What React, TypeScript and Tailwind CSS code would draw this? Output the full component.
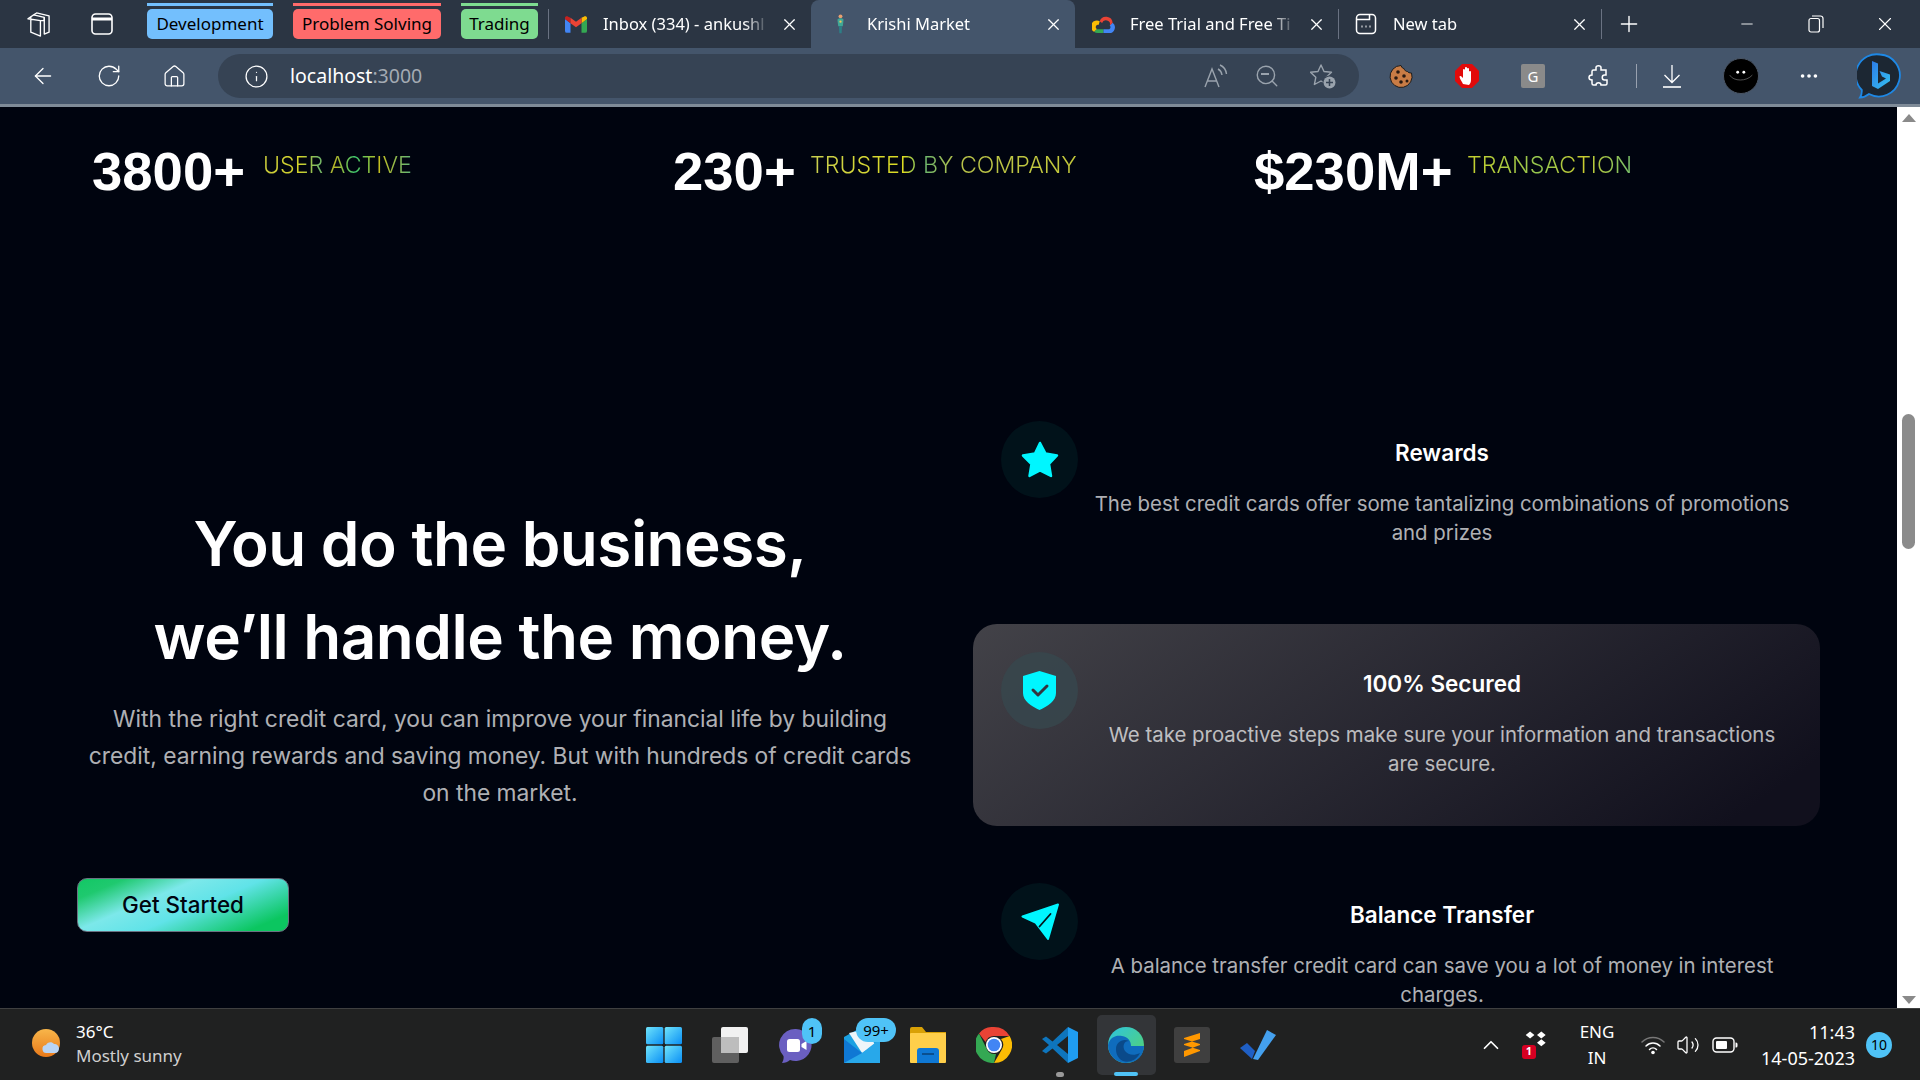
import React from 'react';
import {
  ArrowLeft,
  ChevronUp,
  Home,
  Info,
  Minus,
  MoreHorizontal,
  Plus,
  RotateCw,
  Search,
  Volume2,
  X,
} from 'lucide-react';

const GmailIcon = () => (
  <svg viewBox="0 0 24 18" className="w-[22px] h-[17px] shrink-0">
    <path d="M0 3l6 4.500V18H2a2 2 0 0 1-2-2z" fill="#4285f4" />
    <path d="M24 3l-6 4.500V18h4a2 2 0 0 0 2-2z" fill="#34a853" />
    <path d="M18 1.500v6L24 3V2c0-2-2-2.600-3.500-1.500z" fill="#fbbc04" />
    <path d="M0 3l6 4.500v-6L3.500.5C2-.6 0 0 0 2z" fill="#c5221f" />
    <path d="M6 1.500L12 6l6-4.500v6L12 12 6 7.500z" fill="#ea4335" />
  </svg>
);

const KrishiIcon = () => (
  <svg viewBox="0 0 14 26" className="w-[11px] h-[20px] shrink-0">
    <circle cx="7" cy="3" r="2.500" fill="#e8a070" />
    <path d="M3 7c2-2 6-2 8 0l-1 9H4z" fill="#3fa796" />
    <path d="M5 16h4l-.5 9h-3z" fill="#2d7f86" />
    <circle cx="7" cy="10" r="1.500" fill="#f3c45a" />
  </svg>
);

const GoogleCloudIcon = () => (
  <svg viewBox="0 0 24 20" className="w-[23px] h-[19px] shrink-0">
    <path d="M6 19h6v-4H6a2.500 2.500 0 0 1-1-.2L2 17.500A6 6 0 0 0 6 19z" fill="#34a853" />
    <path d="M12 19h6a6 6 0 0 0 3.600-10.800L18.600 11A2.500 2.500 0 0 1 18 15h-6z" fill="#4285f4" />
    <path d="M2 17.500L5 14.800A2.500 2.500 0 0 1 7 10.300L8 6.500A6 6 0 0 0 2 17.500z" fill="#fbbc04" />
    <path d="M8 6.500A7 7 0 0 1 21.600 8.200L18.600 11A4 4 0 0 0 10.500 8.500L8 6.500z" fill="#ea4335" />
  </svg>
);

const NewTabIcon = () => (
  <svg viewBox="0 0 22 22" className="w-[22px] h-[22px] shrink-0" fill="none" stroke="white" strokeWidth="1.500">
    <rect x="1.500" y="1.500" width="19" height="19" rx="3.500" />
    <path d="M1.500 6.500h13v-5" />
    <path d="M6.500 13.500h1M10.500 13.500h1M14.500 13.500h1" strokeWidth="2" />
  </svg>
);

const Tab = ({ icon, title, active }: { icon: React.ReactNode; title: string; active?: boolean }) => (
  <div
    className={`flex items-center h-full shrink-0 ${
      active ? 'w-[264px] bg-[#44556b] rounded-t-lg pl-[18px] pr-[12px]' : 'w-[262px] pl-[16px] pr-[12px]'
    }`}
  >
    <div className="w-[22px] flex justify-center shrink-0">{icon}</div>
    <span className="ml-[16px] w-[166px] overflow-hidden whitespace-nowrap text-[16.500px] text-white [mask-image:linear-gradient(to_right,black_85%,transparent)]">
      {title}
    </span>
    <X className="ml-auto text-white shrink-0" size={19} strokeWidth={1.5} />
  </div>
);

const Group = ({ label, width, line, bg }: { label: string; width: string; line: string; bg: string }) => (
  <div className={`flex flex-col shrink-0 self-start ${width}`}>
    <div className={`h-[3px] mt-[3px] ${line}`} />
    <div className={`h-[30px] mt-[3px] rounded-[5px] flex items-center justify-center text-[17px] text-black ${bg}`}>
      {label}
    </div>
  </div>
);

const TabStrip = () => (
  <div className="h-12 bg-[#2b3543] flex items-center shrink-0 pl-[26px] relative">
    <svg viewBox="0 0 26 28" className="w-[25px] h-[27px] shrink-0" fill="none" stroke="white" strokeWidth="1.400" strokeLinejoin="round">
      <path d="M2 8l3-2v16l10 4V10L2 8z" />
      <path d="M5 6l3-2 11 2.500V10L15 10" />
      <path d="M8 4l3-2 13 3v17l-5 2V6.500" />
    </svg>
    <svg viewBox="0 0 22 24" className="ml-[40px] w-[22px] h-[24px] shrink-0" fill="none" stroke="white" strokeWidth="1.600">
      <rect x="1" y="2" width="20" height="20" rx="3.500" />
      <path d="M1 7h20" strokeWidth="3" />
    </svg>
    <div className="ml-[34px] flex gap-5 h-full">
      <Group label="Development" width="w-[126px]" line="bg-[#73bffd]" bg="bg-[#73bffd]" />
      <Group label="Problem Solving" width="w-[148px]" line="bg-[#ff6b6b]" bg="bg-[#ff6b6b]" />
      <Group label="Trading" width="w-[77px]" line="bg-[#7edb90]" bg="bg-[#7edb90]" />
    </div>
    <div className="ml-[10px] w-px h-[30px] bg-gray-500 shrink-0" />
    <Tab icon={<GmailIcon />} title="Inbox (334) - ankushl" />
    <Tab active icon={<KrishiIcon />} title="Krishi Market" />
    <div className="w-px" />
    <Tab icon={<GoogleCloudIcon />} title="Free Trial and Free Ti" />
    <div className="w-px h-[30px] bg-gray-500 shrink-0" />
    <Tab icon={<NewTabIcon />} title="New tab" />
    <div className="w-px h-[30px] bg-gray-500 shrink-0" />
    <Plus className="ml-[14px] text-white shrink-0" size={26} strokeWidth={1.3} />
    <Minus className="ml-[96px] text-white shrink-0" size={18} strokeWidth={1.2} />
    <svg viewBox="0 0 16 18" className="ml-[52px] w-[16px] h-[18px] shrink-0" fill="none" stroke="white" strokeWidth="1.200">
      <rect x="1" y="3.500" width="10.500" height="13.500" rx="2" />
      <path d="M4 1h8.500A2.500 2.500 0 0 1 15 3.500V13" />
    </svg>
    <X className="ml-[50px] text-white shrink-0" size={22} strokeWidth={1.2} />
  </div>
);

const ReadAloudIcon = () => (
  <svg viewBox="0 0 26 26" className="w-[26px] h-[26px] shrink-0" fill="none" stroke="#9aa3ad" strokeWidth="1.400">
    <path d="M2 24L9 6l7 18M4.500 18h9" />
    <path d="M15 6c2 1 3.500 3 4 6M17 2c3.500 1.500 6 5 6.500 9" />
  </svg>
);

const FavAddIcon = () => (
  <svg viewBox="0 0 26 26" className="w-[26px] h-[26px] shrink-0" fill="none" stroke="#9aa3ad" strokeWidth="1.400" strokeLinejoin="round">
    <path d="M11 2l3 6.500 7.500.8-5.300 5 1.400 7.200L11 18l-6.600 3.500 1.400-7.200-5.300-5L8 8.500z" />
    <circle cx="19.500" cy="19.500" r="7" fill="#364354" stroke="none" />
    <circle cx="19.500" cy="19.500" r="6" fill="#9aa3ad" stroke="none" />
    <path d="M19.500 16v7M16 19.500h7" stroke="#364354" strokeWidth="1.500" />
  </svg>
);

const CookieIcon = () => (
  <svg viewBox="0 0 24 24" className="w-[24px] h-[24px] shrink-0">
    <path d="M12 1.500c1 2.500 2 3 3 3 .5 2 2 3 3.500 3 .5 1 2 1.500 4 1.500A11 11 0 1 1 12 1.500z" fill="#c97c45" stroke="#1c1c1c" strokeWidth="1" />
    <circle cx="9" cy="8" r="1.800" fill="#2a1a12" />
    <circle cx="15" cy="12" r="1.800" fill="#2a1a12" />
    <circle cx="7" cy="14" r="1.800" fill="#2a1a12" />
    <circle cx="12" cy="18" r="1.800" fill="#2a1a12" />
    <circle cx="18" cy="17" r="1.500" fill="#2a1a12" />
  </svg>
);

const StopHandIcon = () => (
  <svg viewBox="0 0 24 24" className="w-[24px] h-[24px] shrink-0">
    <path d="M7 0h10l7 7v10l-7 7H7l-7-7V7z" fill="#e20a0a" />
    <path d="M8 20c-1-2-3-5-3.500-7 0-1 1-1.500 2-.5L8 14V6c0-1.500 1.800-1.500 2 0v4-6c0-1.500 2-1.500 2 0v6-5c0-1.500 2-1.500 2 0v6-3c0-1.500 2-1.500 2 0v8c0 2-1 4-2 5z" fill="white" />
  </svg>
);

const PuzzleIcon = () => (
  <svg viewBox="0 0 24 24" className="w-[24px] h-[24px] shrink-0" fill="none" stroke="white" strokeWidth="1.500">
    <path d="M9 3.500c0-2.500 5-2.500 5 0V6h5v5h-1.500c-3 0-3 5 0 5H20v3.500a1.500 1.500 0 0 1-1.500 1.500H14c0-3-5-3-5 0H6.500A1.500 1.500 0 0 1 5 19.500V16c-4 0-4-5 0-5V7.500A1.500 1.500 0 0 1 6.500 6H9z" />
  </svg>
);

const DownloadIcon = () => (
  <svg viewBox="0 0 24 24" className="w-[24px] h-[24px] shrink-0" fill="none" stroke="white" strokeWidth="1.300">
    <path d="M12 1v17M4.500 11l7.500 7.500 7.500-7.500" />
    <path d="M3 23h18" strokeWidth="1.600" />
  </svg>
);

const ProfileIcon = () => (
  <div className="w-[36px] h-[36px] rounded-full bg-black border border-gray-600 shrink-0 flex items-center justify-center">
    <svg viewBox="0 0 36 36" className="w-full h-full" fill="none">
      <circle cx="14.500" cy="14" r="1.500" fill="white" />
      <circle cx="21" cy="14" r="1.500" fill="white" />
      <path d="M6 17c4 7 18 7 24 0" stroke="#555" strokeWidth="1" />
    </svg>
  </div>
);

const BingIcon = () => (
  <svg viewBox="0 0 46 46" className="w-[46px] h-[46px] shrink-0">
    <defs>
      <linearGradient id="bing-b" x1="0" y1="0" x2="1" y2="1">
        <stop offset="0" stopColor="#2c7ce8" />
        <stop offset="1" stopColor="#35c1f1" />
      </linearGradient>
    </defs>
    <path d="M23 1.500A21 21 0 1 1 12 41c-2.500 2-6 3.500-9 3.500 1.500-2 2-4 1.800-7.500A21 21 0 0 1 23 1.500z" fill="#1c2733" stroke="#1e88e5" strokeWidth="1.800" />
    <path d="M15 8l6 2.500v20l8-5-4-2-2.500-5.500L33 21.500v6.500l-12 8-6-3z" fill="url(#bing-b)" />
  </svg>
);

const Toolbar = () => (
  <div className="h-[59px] bg-[#44556b] flex items-center shrink-0 pl-[30px] border-b-[3px] border-[#7f8b98]">
    <ArrowLeft className="text-white shrink-0" size={26} strokeWidth={1.2} />
    <RotateCw className="ml-[40px] text-white shrink-0" size={26} strokeWidth={1.2} />
    <Home className="ml-[40px] text-white shrink-0" size={25} strokeWidth={1.2} />
    <div className="ml-[31px] w-[1141px] h-[44px] rounded-[22px] bg-[#364354] flex items-center pl-[26px] pr-[23px] shrink-0">
      <Info className="text-white shrink-0" size={25} strokeWidth={1.2} />
      <span className="ml-[21px] text-[19.500px] text-white">
        localhost<span className="text-[#a4abb3]">:3000</span>
      </span>
      <div className="ml-auto flex items-center">
        <ReadAloudIcon />
        <div className="ml-[25px] relative w-[26px] h-[26px]">
          <Search className="text-[#9aa3ad]" size={26} strokeWidth={1.3} />
          <div className="absolute left-[7px] top-[10px] w-[8px] h-[1.500px] bg-[#9aa3ad]" />
        </div>
        <div className="ml-[30px]">
          <FavAddIcon />
        </div>
      </div>
    </div>
    <div className="ml-[30px]"><CookieIcon /></div>
    <div className="ml-[42px]"><StopHandIcon /></div>
    <div className="ml-[42px] w-[24px] h-[24px] rounded-[2px] bg-[#8a8a8a] text-white text-[15px] flex items-center justify-center">G</div>
    <div className="ml-[42px]"><PuzzleIcon /></div>
    <div className="ml-[25px] w-px h-[24px] bg-gray-400" />
    <div className="ml-[23px]"><DownloadIcon /></div>
    <div className="ml-[39px]"><ProfileIcon /></div>
    <MoreHorizontal className="ml-[39px] text-white shrink-0" size={22} strokeWidth={2} />
    <div className="ml-[37px]"><BingIcon /></div>
  </div>
);

const stats = [
  {
    value: '3800+',
    label: 'USER ACTIVE',
    numberWidth: 'w-[171px]',
    gradient:
      'bg-[linear-gradient(90deg,#c9cb3c_0%,#d2d32a_25%,#6fb56a_38%,#b9b728_48%,#3cc76f_62%,#c5bf1f_78%,#5fb57a_100%)]',
  },
  {
    value: '230+',
    label: 'TRUSTED BY COMPANY',
    numberWidth: 'w-[137px]',
    gradient:
      'bg-[linear-gradient(90deg,#c9cf50_0%,#dcdc22_35%,#67b56f_42%,#b8c34a_55%,#c4c93a_100%)]',
  },
  {
    value: '$230M+',
    label: 'TRANSACTION',
    numberWidth: 'w-[213px]',
    gradient:
      'bg-[linear-gradient(90deg,#c5d02e_0%,#93c550_45%,#c9cc2f_70%,#74bd6a_100%)]',
  },
];

const StatsRow = () => (
  <div className="h-[286px] pl-[92px] pt-[38px] flex font-[Inter,sans-serif]">
    {stats.map((s) => (
      <div key={s.value} className="w-[581px] flex items-start shrink-0">
        <span className={`font-['Liberation_Sans',sans-serif] font-bold text-[54.500px] leading-[54px] text-white whitespace-nowrap shrink-0 ${s.numberWidth}`}>
          {s.value}
        </span>
        <span className={`mt-[8px] text-[23.200px] leading-[24px] font-light bg-clip-text text-transparent ${s.gradient}`}>
          {s.label}
        </span>
      </div>
    ))}
  </div>
);

const StarIcon = () => (
  <svg viewBox="0 0 38 37" className="w-[38px] h-[37px]">
    <path
      d="M19 2l5.500 10.500 11.500 2-8 8.500 2 12L19 29.500 8.500 35l2-12-8.500-8.500 12-2z"
      fill="#00f6ff"
      stroke="#00f6ff"
      strokeWidth="2.500"
      strokeLinejoin="round"
    />
  </svg>
);

const ShieldIcon = () => (
  <svg viewBox="0 0 33 39" className="w-[33px] h-[39px]">
    <path d="M16.500 0L33 5v17c0 8-8 13-16.500 17C8 35 0 30 0 22V5z" fill="#00f6ff" />
    <path d="M10 19l5 5 9-9" fill="none" stroke="#34353f" strokeWidth="3" strokeLinecap="round" strokeLinejoin="round" />
  </svg>
);

const SendIcon = () => (
  <svg viewBox="0 0 38 38" className="w-[38px] h-[38px]">
    <path
      d="M37 1.500L27 36 14.500 19.500 1.500 13.500z"
      fill="#00f6ff"
      stroke="#00f6ff"
      strokeWidth="2"
      strokeLinejoin="round"
    />
    <path d="M18.500 23.500L29.500 11" stroke="#03161c" strokeWidth="1.800" strokeLinecap="round" />
  </svg>
);

const features = [
  {
    icon: <StarIcon />,
    title: 'Rewards',
    body: (
      <>
        The best credit cards offer some tantalizing combinations of promotions
        <br />
        and prizes
      </>
    ),
  },
  {
    icon: <ShieldIcon />,
    title: '100% Secured',
    body: (
      <>
        We take proactive steps make sure your information and transactions
        <br />
        are secure.
      </>
    ),
    active: true,
  },
  {
    icon: <SendIcon />,
    title: 'Balance Transfer',
    body: (
      <>
        A balance transfer credit card can save you a lot of money in interest
        <br />
        charges.
      </>
    ),
  },
];

const Hero = () => (
  <div className="flex font-[Inter,sans-serif]">
    <div className="ml-[77px] w-[846px] shrink-0 pt-[104px] flex flex-col">
      <h1 className="text-[62px] leading-[93px] font-semibold text-white text-center whitespace-nowrap tracking-[-0.5px]">
        You do the business,
        <br />
        we’ll handle the money.
      </h1>
      <p className="mt-[17px] text-[22.800px] leading-[37px] text-white/70 text-center whitespace-nowrap">
        With the right credit card, you can improve your financial life by building
        <br />
        credit, earning rewards and saving money. But with hundreds of credit cards
        <br />
        on the market.
      </p>
      <button className="mt-[67px] w-[212px] h-[54px] rounded-[10px] border border-gray-500 text-[22.400px] font-medium text-[#00040f] bg-[linear-gradient(157deg,#12c764_0%,#1fc96f_14%,#7ce8ea_36%,#60e3e8_56%,#0bc660_88%,#0bc660_100%)]">
        Get Started
      </button>
    </div>
    <div className="ml-[50px] w-[847px] shrink-0 flex flex-col gap-[29px]">
      {features.map((f) => (
        <div
          key={f.title}
          className={`h-[202px] shrink-0 p-[28px] rounded-[24px] flex ${
            f.active ? 'bg-[linear-gradient(144.390deg,#ffffff_-278.560%,#6d6d6d_-78.470%,#11101d_91.610%)]' : ''
          }`}
        >
          <div className={`w-[77px] h-[77px] rounded-full shrink-0 flex items-center justify-center ${f.active ? 'bg-[#37474d]/80' : 'bg-[#09977c]/10'}`}>
            {f.icon}
          </div>
          <div className="ml-[14px] flex-1 pt-[17px] text-center">
            <h4 className="text-[22.500px] leading-[30px] font-semibold text-white">{f.title}</h4>
            <p className="mt-[21px] text-[20.400px] leading-[29px] text-white/70 whitespace-nowrap">{f.body}</p>
          </div>
        </div>
      ))}
    </div>
  </div>
);

const Scrollbar = () => (
  <div className="w-[23px] bg-white flex flex-col items-center shrink-0">
    <svg viewBox="0 0 14 8" className="w-[14px] h-[8px] mt-[7px] shrink-0"><path d="M7 0l7 8H0z" fill="#8a8a8a" /></svg>
    <div className="w-[13px] h-[135px] mt-[292px] rounded-full bg-[#8b8b8b] shrink-0" />
    <svg viewBox="0 0 14 8" className="w-[14px] h-[8px] mt-auto mb-[4px] shrink-0"><path d="M7 8l7-8H0z" fill="#8a8a8a" /></svg>
  </div>
);

const Slot = ({ children }: { children: React.ReactNode }) => (
  <div className="w-[66px] h-full flex items-center justify-center relative shrink-0">{children}</div>
);

const Badge = ({ text, className }: { text: string; className: string }) => (
  <div className={`absolute rounded-full bg-[#4fc3f7] text-black text-[15px] flex items-center justify-center ${className}`}>{text}</div>
);

const StartIcon = () => (
  <svg viewBox="0 0 36 36" className="w-[36px] h-[36px]">
    <defs>
      <linearGradient id="start-g" x1="0" y1="0" x2="1" y2="1">
        <stop offset="0" stopColor="#6fe4fb" />
        <stop offset="1" stopColor="#0a8ff5" />
      </linearGradient>
    </defs>
    <rect x="0" y="0" width="17.300" height="17.300" rx="1.500" fill="url(#start-g)" />
    <rect x="18.700" y="0" width="17.300" height="17.300" rx="1.500" fill="url(#start-g)" />
    <rect x="0" y="18.700" width="17.300" height="17.300" rx="1.500" fill="url(#start-g)" />
    <rect x="18.700" y="18.700" width="17.300" height="17.300" rx="1.500" fill="url(#start-g)" />
  </svg>
);

const TaskViewIcon = () => (
  <svg viewBox="0 0 36 36" className="w-[36px] h-[36px]">
    <rect x="0" y="10" width="27" height="26" rx="2" fill="#5f5f5f" />
    <rect x="9" y="0" width="27" height="26" rx="2" fill="#f1f1f1" />
    <rect x="9" y="10" width="18" height="16" fill="#bdbdbd" />
  </svg>
);

const TeamsIcon = () => (
  <svg viewBox="0 0 36 38" className="w-[36px] h-[38px]">
    <path d="M18 3a16 16 0 1 1-6 31c-2 2-5 3-8 3 1-2 2-4 1.500-7A16 16 0 0 1 18 3z" fill="#6a5fc1" />
    <rect x="9" y="13" width="13" height="13" rx="2.500" fill="white" />
    <path d="M23.500 18l5-3v9l-5-3z" fill="white" />
  </svg>
);

const MailIcon = () => (
  <svg viewBox="0 0 36 36" className="w-[36px] h-[36px]">
    <path d="M0 10L18 0l18 10v26H0z" fill="#1ba1e2" />
    <path d="M5 6l18-4 8 16-13 8z" fill="#eef5f9" />
    <path d="M0 12l18 14 18-14v24H0z" fill="#28a8ea" />
    <path d="M0 12l18 14L0 36z" fill="#0f78d4" />
  </svg>
);

const FolderIcon = () => (
  <svg viewBox="0 0 36 36" className="w-[36px] h-[36px]">
    <path d="M0 2a2 2 0 0 1 2-2h10l4 5h20v4H0z" fill="#d9a106" />
    <rect x="0" y="6" width="36" height="30" rx="1" fill="#ffcf4a" />
    <path d="M7 36V24a3 3 0 0 1 3-3h16a3 3 0 0 1 3 3v12z" fill="#0f78d4" />
    <rect x="12" y="26" width="12" height="2" fill="#0a4f8f" />
  </svg>
);

const ChromeIcon = () => (
  <svg viewBox="0 0 36 36" className="w-[36px] h-[36px]">
    <path d="M18 0a18 18 0 0 1 15.600 9H18a9 9 0 0 0-8.500 6L3 6.500A18 18 0 0 1 18 0z" fill="#ea4335" />
    <path d="M33.600 9A18 18 0 0 1 18 36l7.800-13.500A9 9 0 0 0 25 12z" fill="#fbbc04" />
    <path d="M18 36A18 18 0 0 1 3 6.500l7.500 15A9 9 0 0 0 20 27z" fill="#34a853" />
    <circle cx="18" cy="18" r="8" fill="white" />
    <circle cx="18" cy="18" r="6.300" fill="#4285f4" />
  </svg>
);

const VsCodeIcon = () => (
  <svg viewBox="0 0 36 36" className="w-[36px] h-[36px]">
    <path d="M26 0l10 5v26l-10 5z" fill="#1f9cf0" />
    <path d="M26 0L10.500 14.500 4 9.500 0 12l7 6-7 6 4 2.500 6.500-5L26 36v-9L15 18 26 9z" fill="#0e75bd" />
  </svg>
);

const EdgeIcon = () => (
  <svg viewBox="0 0 36 36" className="w-[36px] h-[36px]">
    <defs>
      <linearGradient id="edge-a" x1="0" y1="0" x2="1" y2="1">
        <stop offset="0" stopColor="#2dc4e0" />
        <stop offset="1" stopColor="#58d468" />
      </linearGradient>
    </defs>
    <circle cx="18" cy="18" r="18" fill="url(#edge-a)" />
    <path d="M0 18C2 10 8 8 14 9c6 1 9 5 9 10h13c0 8-6 17-18 17C8 36 0 28 0 18z" fill="#0f6cbd" />
    <path d="M8 22c0-7 7-11 13-8-5 0-7 5-4 10 3 4 9 5 15 2-4 8-12 10-17 8-4-2-7-6-7-12z" fill="#0a4a8a" />
  </svg>
);

const SublimeIcon = () => (
  <div className="w-[36px] h-[36px] rounded-[3px] bg-[#3f3f3f] flex items-center justify-center">
    <svg viewBox="0 0 18 24" className="w-[18px] h-[24px]">
      <path d="M17 0v6L1 11V5zM1 12l16 5v-6L1 6zM17 12v6L1 24v-6z" fill="#ff9800" />
    </svg>
  </div>
);

const TodoIcon = () => (
  <svg viewBox="0 0 36 30" className="w-[36px] h-[30px]">
    <path d="M13 29L27 0l9 5-18 25z" fill="#44a0ee" />
    <path d="M0 18l7-5 8 8-3 8z" fill="#1f5fc4" />
  </svg>
);

const WeatherIcon = () => (
  <svg viewBox="0 0 32 32" className="w-[32px] h-[32px] shrink-0">
    <defs>
      <linearGradient id="sun-g" x1="0" y1="0" x2="0" y2="1">
        <stop offset="0" stopColor="#f8b64a" />
        <stop offset="1" stopColor="#e8791a" />
      </linearGradient>
    </defs>
    <circle cx="14" cy="15" r="14" fill="url(#sun-g)" />
    <path d="M15 25a4 4 0 0 1-1-8c1-3 6-4 8-1a4.500 4.500 0 0 1 5 4.500c0 2.500-1.500 4.500-4 4.500z" fill="#b9d4f4" />
  </svg>
);

const WifiTray = () => (
  <svg viewBox="0 0 24 20" className="w-[24px] h-[20px] shrink-0" fill="none" strokeLinecap="round">
    <path d="M1 7c6-6 16-6 22 0" stroke="#777" strokeWidth="1.500" />
    <path d="M5 11c4-4 10-4 14 0" stroke="white" strokeWidth="1.500" />
    <path d="M8.500 14.500c2-2 5-2 7 0" stroke="white" strokeWidth="1.500" />
    <circle cx="12" cy="17.500" r="1.800" fill="white" />
  </svg>
);

const BatteryTray = () => (
  <svg viewBox="0 0 26 16" className="w-[26px] h-[16px] shrink-0" fill="none">
    <rect x="1" y="1" width="21" height="14" rx="3.500" stroke="white" strokeWidth="1.400" />
    <rect x="4" y="4" width="11" height="8" rx="1" fill="white" />
    <path d="M23.500 5.500h.5a1.500 1.500 0 0 1 1.500 1.500v2a1.500 1.500 0 0 1-1.500 1.500h-.5z" fill="white" />
  </svg>
);

const DropboxTray = () => (
  <div className="relative w-[30px] h-[28px] ml-[18px] shrink-0">
    <svg viewBox="0 0 30 22" className="absolute left-[2px] top-0 w-[26px] h-[20px]">
      <path d="M7 0l5 4-5 4-5-4zM20 0l5 4-5 4-5-4zM20 9l5 4-5 4-5-4z" fill="white" />
    </svg>
    <div className="absolute left-0 bottom-0 w-[14px] h-[14px] rounded-[3px] bg-[#d70022] text-white text-[11px] font-bold flex items-center justify-center">1</div>
  </div>
);

const Taskbar = () => (
  <div className="h-[72px] bg-[#202121] border-t border-[#3f4040] flex items-center shrink-0 font-['Noto_Sans',sans-serif] text-white">
    <div className="w-[631px] h-full pl-[32px] pb-[2px] flex items-center shrink-0">
      <WeatherIcon />
      <div className="ml-[12px] text-[17px] leading-[24px]">
        <div>36°C</div>
        <div className="text-[#cfcfcf]">Mostly sunny</div>
      </div>
    </div>
    <Slot><StartIcon /></Slot>
    <Slot><TaskViewIcon /></Slot>
    <Slot>
      <TeamsIcon />
      <Badge text="1" className="w-[20px] h-[26px] left-[39px] top-[9px]" />
    </Slot>
    <Slot>
      <MailIcon />
      <Badge text="99+" className="w-[40px] h-[24px] left-[27px] top-[9px]" />
    </Slot>
    <Slot><FolderIcon /></Slot>
    <Slot><ChromeIcon /></Slot>
    <Slot>
      <VsCodeIcon />
      <div className="absolute bottom-[3px] w-[8px] h-[5px] rounded-full bg-[#9a9a9a]" />
    </Slot>
    <Slot>
      <div className="absolute w-[59px] h-[60px] rounded-[5px] bg-[#333538]" />
      <div className="relative"><EdgeIcon /></div>
      <div className="absolute bottom-[4px] w-[24px] h-[4px] rounded-full bg-[#4fc3f7]" />
    </Slot>
    <Slot><SublimeIcon /></Slot>
    <Slot><TodoIcon /></Slot>
    <ChevronUp className="ml-[187px] shrink-0" size={26} strokeWidth={1.6} />
    <DropboxTray />
    <div className="ml-[20px] w-[50px] text-center text-[17px] leading-[26px] shrink-0">
      ENG
      <br />
      IN
    </div>
    <div className="ml-[19px]"><WifiTray /></div>
    <Volume2 className="ml-[11px] shrink-0" size={24} strokeWidth={1.3} />
    <div className="ml-[12px]"><BatteryTray /></div>
    <div className="ml-[7px] w-[110px] text-right text-[18px] leading-[26px] shrink-0">
      11:43
      <br />
      14-05-2023
    </div>
    <div className="ml-[11px] w-[26px] h-[26px] rounded-full bg-[#4fc3f7] text-black text-[14px] flex items-center justify-center shrink-0">10</div>
  </div>
);

const App = () => (
  <div className="w-[1920px] h-[1080px] flex flex-col overflow-hidden font-['Noto_Sans',sans-serif] bg-[#00040f]">
    <TabStrip />
    <Toolbar />
    <div className="h-[901px] flex overflow-hidden shrink-0">
      <main className="w-[1897px] shrink-0 bg-[#00040f] overflow-hidden">
        <StatsRow />
        <Hero />
      </main>
      <Scrollbar />
    </div>
    <Taskbar />
  </div>
);

export default App;
